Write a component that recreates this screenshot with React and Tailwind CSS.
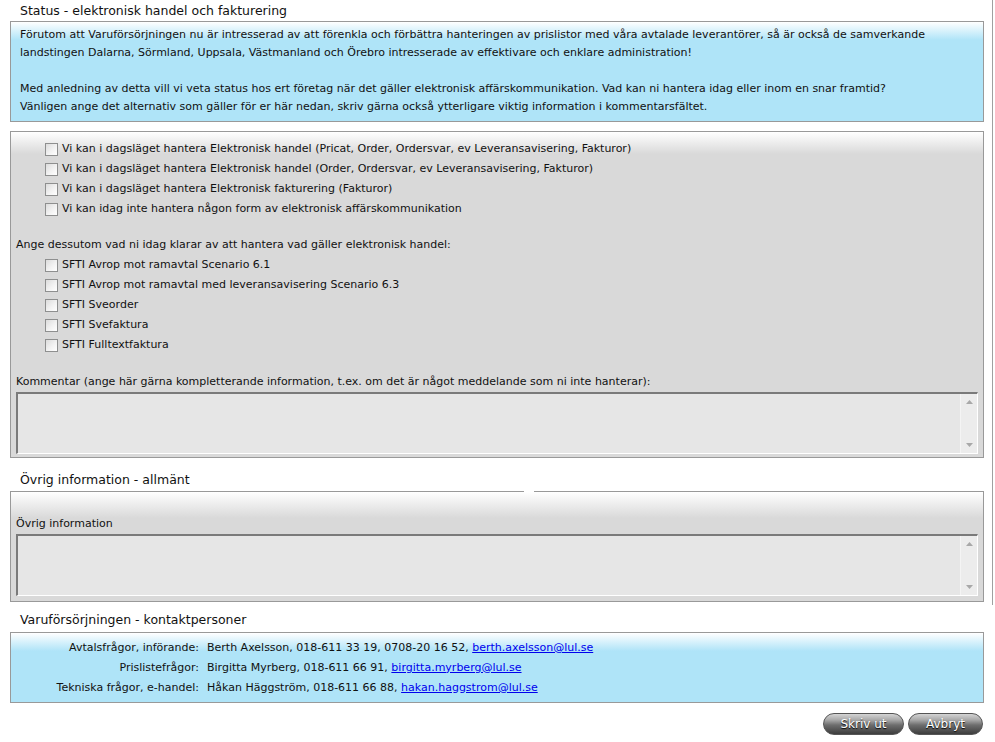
import React from "react";

function Checkbox() {
  return (
    <span className="inline-block w-[13px] h-[13px] border border-[#8e8f8f] bg-[linear-gradient(135deg,#dcdcdc_0%,#f4f4f4_60%,#ffffff_100%)] shrink-0" />
  );
}

function CheckRow({ children }) {
  return (
    <div className="flex items-center h-[20px] pl-[29px]">
      <Checkbox />
      <span className="ml-[4px]">{children}</span>
    </div>
  );
}

function TextArea() {
  return (
    <div className="flex h-[62px] border-t-2 border-l-2 border-t-[#7a7a7a] border-l-[#7a7a7a] border-b border-r border-b-white border-r-white bg-[#e6e6e6]">
      <div className="flex-1" />
      <div className="w-[17px] bg-[#ececec] border-l border-l-[#f4f4f4] flex flex-col items-center justify-between py-[6px]">
        <svg width="7" height="4" viewBox="0 0 7 4"><path d="M0 4 L3.5 0 L7 4 Z" fill="#a8a8a8" /></svg>
        <svg width="7" height="4" viewBox="0 0 7 4"><path d="M0 0 L3.5 4 L7 0 Z" fill="#a8a8a8" /></svg>
      </div>
    </div>
  );
}

function SectionTitle({ children }) {
  return <div className="h-[18px] leading-[18px] pl-[10px] text-[12.5px] text-[#111]">{children}</div>;
}

export default function App() {
  return (
    <div
      className="relative w-[995px] h-[742px] bg-white text-[11px] text-[#111] overflow-hidden"
      style={{ fontFamily: '"DejaVu Sans", sans-serif' }}
    >
      <div className="absolute right-[2px] top-0 h-[605px] w-px bg-[#a0a0a0]" />
      <div className="w-[974px] ml-[10px] pt-[2px]">
        <SectionTitle>Status - elektronisk handel och fakturering</SectionTitle>
        <div className="mt-[1px] border border-[#999] bg-[linear-gradient(180deg,#ffffff_0px,#afe4f8_18px,#afe4f8_100%)] pl-[9px] pt-[4px] pb-[5px] leading-[18px]">
          <div>Förutom att Varuförsörjningen nu är intresserad av att förenkla och förbättra hanteringen av prislistor med våra avtalade leverantörer, så är också de samverkande</div>
          <div>landstingen Dalarna, Sörmland, Uppsala, Västmanland och Örebro intresserade av effektivare och enklare administration!</div>
          <div className="h-[18px]" />
          <div>Med anledning av detta vill vi veta status hos ert företag när det gäller elektronisk affärskommunikation. Vad kan ni hantera idag eller inom en snar framtid?</div>
          <div>Vänligen ange det alternativ som gäller för er här nedan, skriv gärna också ytterligare viktig information i kommentarsfältet.</div>
        </div>

        <div className="mt-[9px] border border-[#999] bg-[linear-gradient(180deg,#ffffff_0px,#d9d9d9_22px,#d9d9d9_100%)] pt-[7px] pb-[3px] px-[5px]">
          <CheckRow>Vi kan i dagsläget hantera Elektronisk handel (Pricat, Order, Ordersvar, ev Leveransavisering, Fakturor)</CheckRow>
          <CheckRow>Vi kan i dagsläget hantera Elektronisk handel (Order, Ordersvar, ev Leveransavisering, Fakturor)</CheckRow>
          <CheckRow>Vi kan i dagsläget hantera Elektronisk fakturering (Fakturor)</CheckRow>
          <CheckRow>Vi kan idag inte hantera någon form av elektronisk affärskommunikation</CheckRow>
          <div className="h-[20px] leading-[20px] mt-[16px]">Ange dessutom vad ni idag klarar av att hantera vad gäller elektronisk handel:</div>
          <CheckRow>SFTI Avrop mot ramavtal Scenario 6.1</CheckRow>
          <CheckRow>SFTI Avrop mot ramavtal med leveransavisering Scenario 6.3</CheckRow>
          <CheckRow>SFTI Sveorder</CheckRow>
          <CheckRow>SFTI Svefaktura</CheckRow>
          <CheckRow>SFTI Fulltextfaktura</CheckRow>
          <div className="h-[20px] leading-[20px] mt-[17px]">Kommentar (ange här gärna kompletterande information, t.ex. om det är något meddelande som ni inte hanterar):</div>
          <TextArea />
        </div>

        <div className="mt-[13px]">
          <SectionTitle>Övrig information - allmänt</SectionTitle>
        </div>
        <div className="relative mt-[2px] border border-[#999] bg-[linear-gradient(180deg,#ffffff_0px,#d9d9d9_26px,#d9d9d9_100%)] pt-[22px] pb-[5px] px-[5px]">
          <div className="absolute -top-px left-[513px] w-[10px] h-px bg-white" />
          <div className="h-[20px] leading-[20px]">Övrig information</div>
          <TextArea />
        </div>

        <div className="mt-[9px]">
          <SectionTitle>Varuförsörjningen - kontaktpersoner</SectionTitle>
        </div>
        <div className="mt-[3px] border border-[#999] bg-[linear-gradient(180deg,#ffffff_0px,#afe4f8_18px,#afe4f8_100%)] pt-[5px] pb-[4px]">
          {[
            ["Avtalsfrågor, införande:", "Berth Axelsson, 018-611 33 19, 0708-20 16 52, ", "berth.axelsson@lul.se"],
            ["Prislistefrågor:", "Birgitta Myrberg, 018-611 66 91, ", "birgitta.myrberg@lul.se"],
            ["Tekniska frågor, e-handel:", "Håkan Häggström, 018-611 66 88, ", "hakan.haggstrom@lul.se"],
          ].map(([l, v, e]) => (
            <div key={l} className="flex h-[20px] items-center">
              <div className="w-[188px] text-right">{l}</div>
              <div className="ml-[8px] whitespace-pre">
                {v}
                <a href="#" className="text-[#0000ee] underline">{e}</a>
              </div>
            </div>
          ))}
        </div>

        <div className="flex justify-end gap-[4px] mt-[10px] pr-[1px]">
          {[["Skriv ut", "w-[81px]"], ["Avbryt", "w-[75px]"]].map(([t, w]) => (
            <button
              key={t}
              className={`${w} h-[22px] rounded-full border border-[#555] bg-[linear-gradient(180deg,#d4d4d4_0%,#a8a8a8_30%,#6e6e6e_55%,#3c3c3c_100%)] text-white text-[12px] leading-[20px] [text-shadow:0_1px_1px_#000]`}
            >
              {t}
            </button>
          ))}
        </div>
      </div>
    </div>
  );
}
